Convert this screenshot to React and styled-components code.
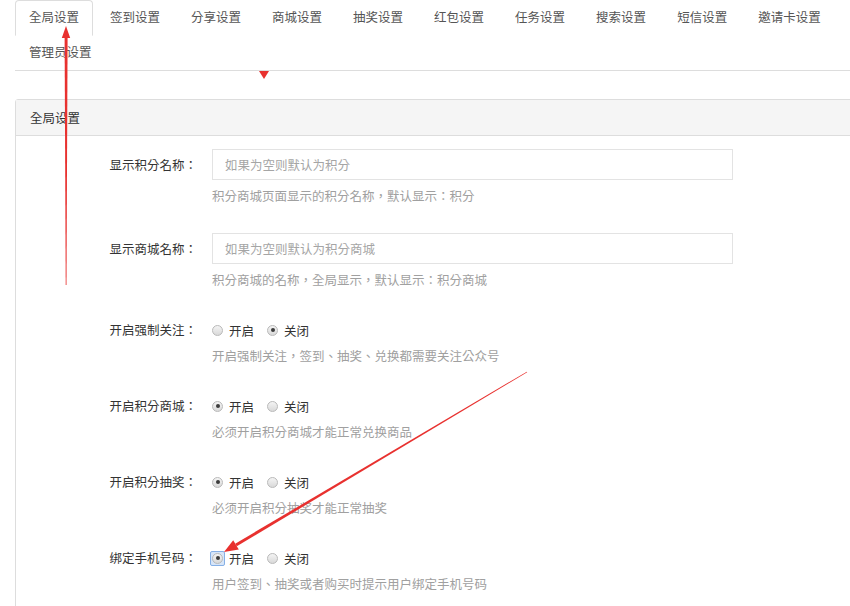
import styled, { createGlobalStyle } from "styled-components";

const GlobalStyle = createGlobalStyle`
  html, body {
    margin: 0;
    padding: 0;
    background: #fff;
    overflow: hidden;
  }
  body {
    font-family: "Noto Sans CJK TC", "Noto Sans CJK SC", "Noto Sans", sans-serif;
    font-size: 12.5px;
    color: #333;
  }
`;

const Page = styled.div`
  position: relative;
  width: 850px;
  height: 606px;
  overflow: hidden;
`;

const Container = styled.div`
  width: 880px;
  margin-left: 15px;
`;

const Tabs = styled.ul`
  display: flex;
  flex-wrap: wrap;
  list-style: none;
  margin: 0;
  padding: 0;
  border-bottom: 1px solid #ddd;
`;

const Tab = styled.li`
  box-sizing: border-box;
  height: 36px;
  line-height: 32px;
  padding: 0 13px;
  margin: 0 3px -1px 0;
  color: #555;
  white-space: nowrap;
  background: ${(p) => (p.$active ? "#fff" : "transparent")};
  border: 1px solid ${(p) => (p.$active ? "#ddd" : "transparent")};
  border-bottom-color: ${(p) => (p.$active ? "#fff" : "transparent")};
  border-radius: 4px 4px 0 0;
`;

const Panel = styled.div`
  margin-top: 28px;
  border: 1px solid #ddd;
  border-radius: 3px;
`;

const PanelHeader = styled.div`
  height: 35px;
  line-height: 35px;
  padding: 0 14px;
  background: #f5f5f5;
  border-bottom: 1px solid #ddd;
  color: #333;
`;

const PanelBody = styled.div`
  padding-top: 13px;
`;

const Row = styled.div`
  display: grid;
  grid-template-columns: 181px 521px;
  column-gap: 15px;
  margin-bottom: 28px;
`;

const Label = styled.label`
  text-align: right;
  white-space: nowrap;
  color: #333;
  line-height: ${(p) => (p.$tall ? "31px" : "26px")};
`;

const Field = styled.div`
  display: flex;
  flex-direction: column;
`;

const Input = styled.input`
  box-sizing: border-box;
  width: 100%;
  height: 31px;
  padding: 0 12px;
  border: 1px solid #e3e3e3;
  border-radius: 0;
  font-family: inherit;
  font-size: 12.5px;
  color: #333;
  outline: none;
  &::placeholder {
    color: #a5a5a5;
  }
`;

const Help = styled.div`
  margin-top: ${(p) => (p.$tall ? "7px" : "4px")};
  line-height: 18px;
  color: #a0a0a0;
  white-space: nowrap;
`;

const RadioGroup = styled.div`
  display: flex;
  align-items: center;
  height: 26px;
`;

const RadioOption = styled.span`
  display: inline-flex;
  align-items: center;
  gap: 6px;
  margin-right: 13px;
  color: #333;
`;

const Dot = styled.span`
  position: relative;
  box-sizing: border-box;
  display: inline-block;
  width: 11px;
  height: 11px;
  border-radius: 50%;
  border: 1px solid #b9b9b9;
  background: linear-gradient(#f4f4f4, #d9d9d9);
  &::after {
    content: "";
    display: ${(p) => (p.$checked ? "block" : "none")};
    position: absolute;
    left: 2.5px;
    top: 2.5px;
    width: 4px;
    height: 4px;
    border-radius: 50%;
    background: #3c3c3c;
  }
`;

const FocusRing = styled.span`
  display: inline-flex;
  padding: 1px;
  margin: -2px;
  border: 1px solid #86b0e6;
  border-radius: 2px;
  background: #d6e5f8;
`;

const Overlay = styled.svg`
  position: absolute;
  left: 0;
  top: 0;
  pointer-events: none;
`;

const tabs = [
  "全局设置",
  "签到设置",
  "分享设置",
  "商城设置",
  "抽奖设置",
  "红包设置",
  "任务设置",
  "搜索设置",
  "短信设置",
  "邀请卡设置",
  "管理员设置",
];

const inputRows = [
  { label: "显示积分名称：", placeholder: "如果为空则默认为积分", help: "积分商城页面显示的积分名称，默认显示：积分" },
  { label: "显示商城名称：", placeholder: "如果为空则默认为积分商城", help: "积分商城的名称，全局显示，默认显示：积分商城" },
];

const radioRows = [
  { label: "开启强制关注：", on: false, help: "开启强制关注，签到、抽奖、兑换都需要关注公众号" },
  { label: "开启积分商城：", on: true, help: "必须开启积分商城才能正常兑换商品" },
  { label: "开启积分抽奖：", on: true, help: "必须开启积分抽奖才能正常抽奖" },
  { label: "绑定手机号码：", on: true, focus: true, help: "用户签到、抽奖或者购买时提示用户绑定手机号码" },
];

const Radio = ({ checked, focus, text }) => (
  <RadioOption>
    {focus ? (
      <FocusRing>
        <Dot $checked={checked} />
      </FocusRing>
    ) : (
      <Dot $checked={checked} />
    )}
    {text}
  </RadioOption>
);

const Arrows = () => (
  <Overlay width="850" height="606" viewBox="0 0 850 606">
    <g fill="#e8312f">
      <polygon points="64.6,36 67.6,36 66.5,285 65.7,285" />
      <polygon points="66,26 61.8,38 70.2,38" />
      <polygon points="527.2,372.3 236.8,546.3 235.2,543.7 526.8,371.7" />
      <polygon points="224,552 238.8,549.5 233.2,540.3" />
      <polygon points="259,71 269,71 264,79" />
    </g>
  </Overlay>
);

export default function App() {
  return (
    <Page>
      <GlobalStyle />
      <Container>
        <Tabs>
          {tabs.map((t, i) => (
            <Tab key={t} $active={i === 0}>
              {t}
            </Tab>
          ))}
        </Tabs>

        <Panel>
          <PanelHeader>全局设置</PanelHeader>
          <PanelBody>
            {inputRows.map((r) => (
              <Row key={r.label}>
                <Label $tall>{r.label}</Label>
                <Field>
                  <Input placeholder={r.placeholder} />
                  <Help $tall>{r.help}</Help>
                </Field>
              </Row>
            ))}
            {radioRows.map((r) => (
              <Row key={r.label}>
                <Label>{r.label}</Label>
                <Field>
                  <RadioGroup>
                    <Radio checked={r.on} focus={r.focus} text="开启" />
                    <Radio checked={!r.on} text="关闭" />
                  </RadioGroup>
                  <Help>{r.help}</Help>
                </Field>
              </Row>
            ))}
          </PanelBody>
        </Panel>
      </Container>
      <Arrows />
    </Page>
  );
}
